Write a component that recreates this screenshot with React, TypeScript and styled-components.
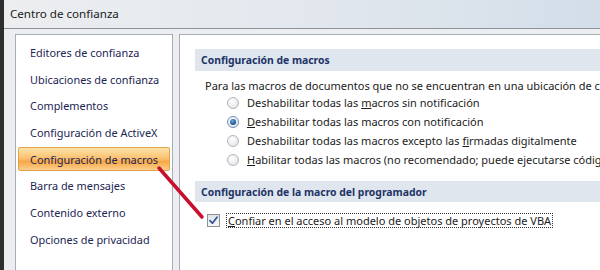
import React from "react";
import styled, { createGlobalStyle } from "styled-components";

const Global = createGlobalStyle`
  html, body { margin: 0; padding: 0; background: #f0f0f0; }
  body { font-family: "Noto Sans", "Open Sans", sans-serif; }
  * { box-sizing: border-box; }
`;

const Window = styled.div`
  position: relative;
  width: 600px;
  height: 270px;
  overflow: hidden;
  display: flex;
  flex-direction: column;
  background: #eef0f2;
  border-left: 4px solid #2e2e2e;
  box-shadow: inset 1px 0 0 #c9ced4;
`;

const TitleBar = styled.div`
  height: 29px;
  flex: none;
  display: flex;
  align-items: center;
  padding-left: 6px;
  padding-bottom: 1px;
  font-size: 11.6px;
  color: #1a1a1a;
  background: linear-gradient(90deg, #eceef0 0%, #e3e8ee 50%, #d3dee9 100%);
  border-bottom: 1px solid #8c939b;
`;

const Body = styled.div`
  flex: 1;
  display: flex;
  gap: 6px;
  padding: 5px 0 0 11px;
  background: #eceef1;
  min-height: 0;
`;

const Nav = styled.div`
  width: 158px;
  flex: none;
  background: #fff;
  border: 1px solid #a6adb6;
  border-bottom: none;
  padding-top: 4px;
  display: flex;
  flex-direction: column;
`;

const NavItem = styled.div<{ $active?: boolean }>`
  height: 24.7px;
  margin: 1px 2px;
  display: flex;
  align-items: center;
  padding-left: 11px;
  font-size: 10.9px;
  color: #1c2553;
  white-space: nowrap;
  border-radius: 2px;
  border: 1px solid ${(p) => (p.$active ? "#e2a24c" : "transparent")};
  background: ${(p) =>
    p.$active
      ? "linear-gradient(180deg, #fde4a8 0%, #fbc274 45%, #f7a846 62%, #fccf8c 100%)"
      : "transparent"};
`;

const Main = styled.div`
  flex: 1;
  background: #fff;
  border: 1px solid #a6adb6;
  border-right: none;
  border-bottom: none;
  padding: 14px 0 0 15px;
  display: flex;
  flex-direction: column;
  min-width: 0;
`;

const SectionHeader = styled.div<{ $h: number }>`
  height: ${(p) => p.$h}px;
  flex: none;
  display: flex;
  align-items: center;
  padding-left: 6px;
  font-size: 10.4px;
  font-weight: 700;
  color: #1d3366;
  background: #dfe6ee;
  white-space: nowrap;
`;

const Intro = styled.div`
  margin-top: 8px;
  height: 14px;
  line-height: 14px;
  padding-left: 10px;
  font-size: 11px;
  color: #1b1b1b;
  white-space: nowrap;
`;

const RadioList = styled.div`
  display: flex;
  flex-direction: column;
  padding-left: 32px;
`;

const RadioRow = styled.div`
  height: 19px;
  display: flex;
  align-items: center;
  gap: 8px;
  font-size: 11px;
  color: #1b1b1b;
  white-space: nowrap;
`;

const RadioDot = styled.span<{ $checked?: boolean }>`
  width: 12px;
  height: 12px;
  flex: none;
  border-radius: 50%;
  border: 1px solid ${(p) => (p.$checked ? "#6d8fb3" : "#b3b6ba")};
  background: radial-gradient(circle at 40% 35%, #ffffff 0%, #e6e8ea 70%, #d2d5d8 100%);
  display: flex;
  align-items: center;
  justify-content: center;
  &::after {
    content: "";
    display: ${(p) => (p.$checked ? "block" : "none")};
    width: 6px;
    height: 6px;
    border-radius: 50%;
    background: radial-gradient(circle at 40% 35%, #6fb0e8 0%, #1f5e9c 55%, #123c6a 100%);
  }
`;

const Spacer = styled.div`
  height: 12px;
  flex: none;
`;

const CheckRow = styled.div`
  margin-top: 10px;
  height: 16px;
  display: flex;
  align-items: center;
  padding-left: 12px;
  gap: 6px;
  font-size: 11px;
  color: #1b1b1b;
  white-space: nowrap;
`;

const CheckBox = styled.span`
  width: 13px;
  height: 13px;
  flex: none;
  border: 1px solid #8e9297;
  background: linear-gradient(180deg, #dfe3e8 0%, #f6f7f9 100%);
  display: flex;
  align-items: center;
  justify-content: center;
`;

const FocusLabel = styled.span`
  border: 1px dotted #333;
  padding: 0 1px;
  line-height: 13px;
`;

const Arrow = styled.svg`
  position: absolute;
  left: 0;
  top: 0;
  pointer-events: none;
`;

const navItems = [
  "Editores de confianza",
  "Ubicaciones de confianza",
  "Complementos",
  "Configuración de ActiveX",
  "Configuración de macros",
  "Barra de mensajes",
  "Contenido externo",
  "Opciones de privacidad",
];

export default function App() {
  return (
    <>
      <Global />
      <Window>
        <TitleBar>Centro de confianza</TitleBar>
        <Body>
          <Nav>
            {navItems.map((t) => (
              <NavItem key={t} $active={t === "Configuración de macros"}>
                {t}
              </NavItem>
            ))}
          </Nav>
          <Main>
            <SectionHeader $h={22}>Configuración de macros</SectionHeader>
            <Intro>
              Para las macros de documentos que no se encuentran en una ubicación de confianza:
            </Intro>
            <RadioList>
              <RadioRow>
                <RadioDot />
                <span>
                  Deshabilitar todas las <u>m</u>acros sin notificación
                </span>
              </RadioRow>
              <RadioRow>
                <RadioDot $checked />
                <span>
                  <u>D</u>eshabilitar todas las macros con notificación
                </span>
              </RadioRow>
              <RadioRow>
                <RadioDot />
                <span>
                  Deshabilitar todas las macros excepto las <u>f</u>irmadas digitalmente
                </span>
              </RadioRow>
              <RadioRow>
                <RadioDot />
                <span>
                  <u>H</u>abilitar todas las macros (no recomendado; puede ejecutarse código posiblemente peligroso)
                </span>
              </RadioRow>
            </RadioList>
            <Spacer />
            <SectionHeader $h={21}>Configuración de la macro del programador</SectionHeader>
            <CheckRow>
              <CheckBox>
                <svg width="9" height="9" viewBox="0 0 9 9">
                  <path d="M1 4.6 L3.4 7.2 L8 1.2" fill="none" stroke="#2c4f8c" strokeWidth="1.6" strokeLinecap="round" strokeLinejoin="round" />
                </svg>
              </CheckBox>
              <FocusLabel>
                <u>C</u>onfiar en el acceso al modelo de objetos de proyectos de VBA
              </FocusLabel>
            </CheckRow>
          </Main>
        </Body>
        <Arrow width="600" height="270" viewBox="0 0 600 270">
          <line x1="155" y1="168" x2="198" y2="217" stroke="#c8102e" strokeWidth="3.5" strokeLinecap="round" />
        </Arrow>
      </Window>
    </>
  );
}
